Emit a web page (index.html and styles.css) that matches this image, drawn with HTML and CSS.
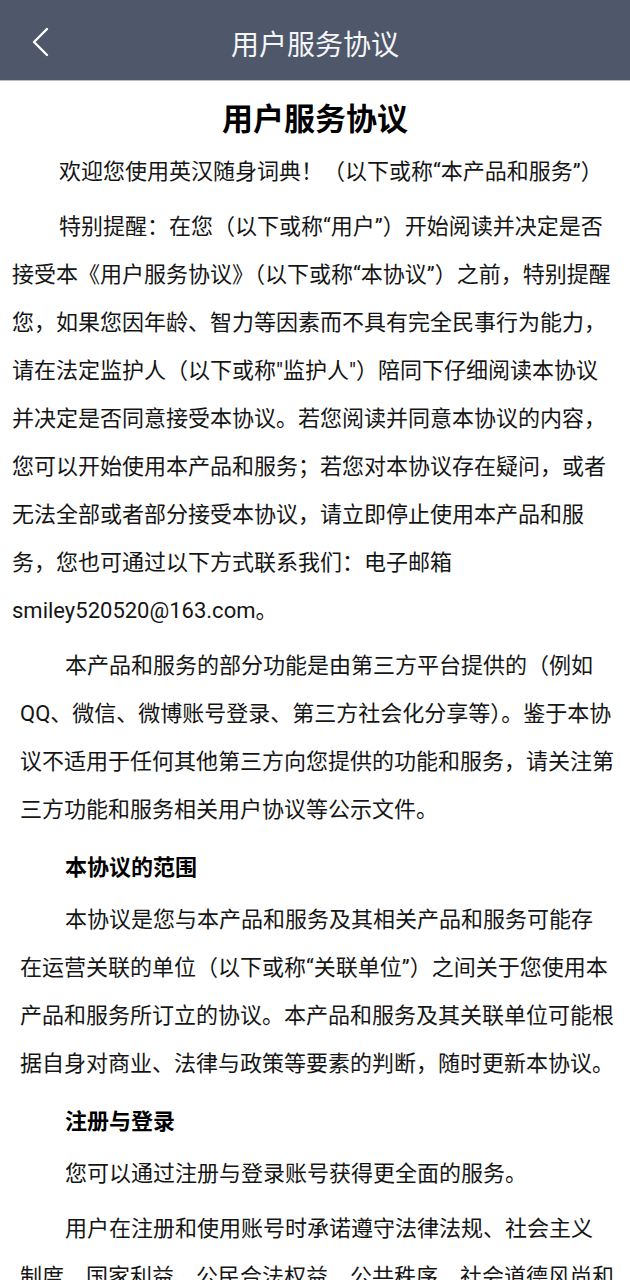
FILE: index.html
```html
<!DOCTYPE html>
<html lang="zh-CN">
<head>
<meta charset="utf-8">
<meta name="viewport" content="width=device-width, initial-scale=1">
<title>用户服务协议</title>
<link rel="stylesheet" href="styles.css">
</head>
<body>
<header class="topbar">
  <div class="back">
    <svg class="back-icon" width="24" height="32" viewBox="0 0 24 32" aria-hidden="true">
      <polyline points="18,3 5,16 18,29" fill="none" stroke="#ffffff" stroke-width="2.4" stroke-linecap="round" stroke-linejoin="round"/>
    </svg>
  </div>
  <div class="topbar-title">用户服务协议</div>
  <div class="spacer"></div>
</header>
<main class="content">
  <h1 class="doc-title">用户服务协议</h1>
  <section class="intro">
    <p class="para">欢迎您使用英汉随身词典！（以下或称“本产品和服务”）</p>
    <p class="para">特别提醒：在您（以下或称“用户”）开始阅读并决定是否接受本《用户服务协议》（以下或称“本协议”）之前，特别提醒您，如果您因年龄、智力等因素而不具有完全民事行为能力，请在法定监护人（以下或称"监护人"）陪同下仔细阅读本协议并决定是否同意接受本协议。若您阅读并同意本协议的内容，您可以开始使用本产品和服务；若您对本协议存在疑问，或者无法全部或者部分接受本协议，请立即停止使用本产品和服务，您也可通过以下方式联系我们：电子邮箱smiley520520@163.com。</p>
  </section>
  <section class="terms">
    <p class="para">本产品和服务的部分功能是由第三方平台提供的（例如QQ、微信、微博账号登录、第三方社会化分享等）。鉴于本协议不适用于任何其他第三方向您提供的功能和服务，请关注第三方功能和服务相关用户协议等公示文件。</p>
    <h2 class="heading">本协议的范围</h2>
    <p class="para">本协议是您与本产品和服务及其相关产品和服务可能存在运营关联的单位（以下或称“关联单位”）之间关于您使用本产品和服务所订立的协议。本产品和服务及其关联单位可能根据自身对商业、法律与政策等要素的判断，随时更新本协议。</p>
    <h2 class="heading">注册与登录</h2>
    <p class="para">您可以通过注册与登录账号获得更全面的服务。</p>
    <p class="para">用户在注册和使用账号时承诺遵守法律法规、社会主义制度、国家利益、公民合法权益、公共秩序、社会道德风尚和信息真实性等七条底线，不得利用账号从事任何违法违规活动。</p>
  </section>
</main>
</body>
</html>
```

FILE: styles.css
```css
html, body {
  margin: 0;
  padding: 0;
  background: #ffffff;
}

body {
  font-family: Roboto, "Noto Sans CJK SC", "Noto Sans", sans-serif;
  color: #151515;
}

.topbar {
  display: grid;
  grid-template-columns: 80px 1fr 80px;
  align-items: center;
  height: 80px;
  background: #4f586a;
  border-bottom: 1px solid #b9bdc5;
}

.back {
  display: flex;
  align-items: center;
  padding-left: 29px;
}

.back-icon {
  display: block;
}

.topbar-title {
  text-align: center;
  color: #f4f5f7;
  font-size: 28px;
  font-family: "Noto Sans CJK SC", sans-serif;
  font-weight: 400;
  line-height: 80px;
  padding-top: 3px;
}

.content {
  padding-bottom: 40px;
}

.doc-title {
  margin: 12px 0 7px;
  text-align: center;
  font-size: 31px;
  font-weight: 700;
  line-height: 48px;
  color: #000000;
  font-family: "Noto Sans CJK SC", sans-serif;
}

.para {
  margin: 0 0 7px;
  font-size: 22px;
  line-height: 48px;
}

.intro {
  padding: 0 16px 0 12px;
}

.intro .para {
  text-indent: 47px;
}

.terms {
  padding: 0 15.5px 0 20px;
}

.terms .para {
  text-indent: 45px;
}

.heading {
  margin: 0 0 7px;
  padding-left: 45px;
  font-size: 22px;
  font-weight: 700;
  line-height: 48px;
  font-family: "Noto Sans CJK SC", sans-serif;
  color: #000000;
}
```
